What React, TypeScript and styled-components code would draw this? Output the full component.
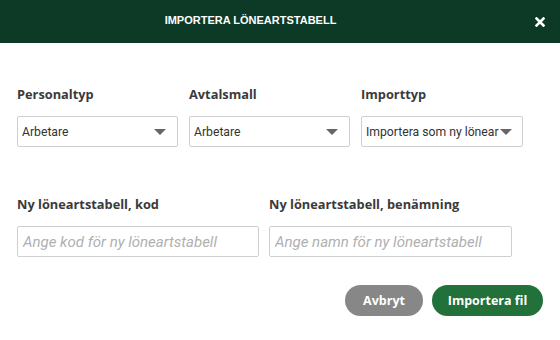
import styled, { createGlobalStyle } from 'styled-components'

const GlobalStyle = createGlobalStyle`
  html, body {
    margin: 0;
    padding: 0;
    background: #ffffff;
  }
`

const StyledDialog = styled.div`
  width: 560px;
  height: 340px;
  display: flex;
  flex-direction: column;
  background: #ffffff;
  font-family: 'Open Sans', 'Liberation Sans', sans-serif;
`

const StyledHeader = styled.div`
  height: 43px;
  flex: 0 0 auto;
  display: flex;
  align-items: center;
  background: #0c3a27;
  color: #ffffff;
  padding: 0 13px 0 0;
`

const StyledTitle = styled.div`
  flex: 1 1 auto;
  text-align: center;
  padding-right: 32px;
  font-family: 'Liberation Sans', Arial, sans-serif;
  font-weight: 700;
  font-size: 11px;
  margin-top: -4px;
`

const StyledClose = styled.div`
  width: 14px;
  display: flex;
  justify-content: center;
`

const StyledBody = styled.div`
  flex: 1 1 auto;
  display: flex;
  flex-direction: column;
  padding: 42px 17px 0;
`

const StyledRow = styled.div<{ $gap: number; $spacing: number }>`
  display: flex;
  gap: ${({ $gap }) => $gap}px;
  margin-bottom: ${({ $spacing }) => $spacing}px;
`

const StyledField = styled.div<{ $width: number }>`
  width: ${({ $width }) => $width}px;
  display: flex;
  flex-direction: column;
`

const StyledLabel = styled.label`
  font-weight: 700;
  font-size: 12.8px;
  color: #3a3a3a;
  line-height: 18px;
  margin-bottom: 13px;
`

const StyledSelect = styled.div<{ $padRight?: number }>`
  height: 31px;
  box-sizing: border-box;
  border: 1px solid #cfcfcf;
  border-radius: 2px;
  display: flex;
  align-items: center;
  padding: 0 ${({ $padRight }) => $padRight ?? 11}px 0 4px;
  font-family: Roboto, 'Liberation Sans', sans-serif;
  font-size: 12.2px;
  color: #333333;
`

const StyledSelectText = styled.span`
  flex: 1 1 auto;
  overflow: hidden;
  white-space: nowrap;
`

const StyledArrow = styled.span`
  flex: 0 0 auto;
  width: 0;
  height: 0;
  border-left: 6px solid transparent;
  border-right: 6px solid transparent;
  border-top: 6px solid #666666;
  margin-left: 1px;
`

const StyledInput = styled.input`
  height: 31px;
  box-sizing: border-box;
  border: 1px solid #cfcfcf;
  border-radius: 2px;
  padding: 0 5px;
  font-family: Roboto, 'Liberation Sans', sans-serif;
  font-size: 15px;
  outline: none;
  &::placeholder {
    color: #b0b0b0;
    font-style: italic;
  }
`

const StyledFooter = styled.div`
  display: flex;
  justify-content: flex-end;
  gap: 9px;
`

const StyledButton = styled.button<{ $variant: 'grey' | 'green'; $width: number }>`
  width: ${({ $width }) => $width}px;
  height: 31px;
  border: none;
  border-radius: 16px;
  background: ${({ $variant }) => ($variant === 'green' ? '#22703a' : '#878787')};
  color: #ffffff;
  font-family: 'Open Sans', 'Liberation Sans', sans-serif;
  font-weight: 700;
  font-size: 12.5px;
  cursor: pointer;
`

const App = () => {
  return (
    <>
      <GlobalStyle />
      <StyledDialog>
        <StyledHeader>
          <StyledTitle>IMPORTERA LÖNEARTSTABELL</StyledTitle>
          <StyledClose>
            <svg width="10" height="10" viewBox="0 0 10 10">
              <path
                d="M1.5 1.5 L8.5 8.5 M8.5 1.5 L1.5 8.5"
                stroke="#ffffff"
                strokeWidth="2.6"
                strokeLinecap="square"
              />
            </svg>
          </StyledClose>
        </StyledHeader>
        <StyledBody>
          <StyledRow $gap={11} $spacing={48}>
            <StyledField $width={161}>
              <StyledLabel>Personaltyp</StyledLabel>
              <StyledSelect>
                <StyledSelectText>Arbetare</StyledSelectText>
                <StyledArrow />
              </StyledSelect>
            </StyledField>
            <StyledField $width={161}>
              <StyledLabel>Avtalsmall</StyledLabel>
              <StyledSelect>
                <StyledSelectText>Arbetare</StyledSelectText>
                <StyledArrow />
              </StyledSelect>
            </StyledField>
            <StyledField $width={162}>
              <StyledLabel>Importtyp</StyledLabel>
              <StyledSelect $padRight={10}>
                <StyledSelectText>Importera som ny lönear</StyledSelectText>
                <StyledArrow />
              </StyledSelect>
            </StyledField>
          </StyledRow>
          <StyledRow $gap={10} $spacing={28}>
            <StyledField $width={242}>
              <StyledLabel>Ny löneartstabell, kod</StyledLabel>
              <StyledInput placeholder="Ange kod för ny löneartstabell" />
            </StyledField>
            <StyledField $width={243}>
              <StyledLabel>Ny löneartstabell, benämning</StyledLabel>
              <StyledInput placeholder="Ange namn för ny löneartstabell" />
            </StyledField>
          </StyledRow>
          <StyledFooter>
            <StyledButton $variant="grey" $width={78}>
              Avbryt
            </StyledButton>
            <StyledButton $variant="green" $width={111}>
              Importera fil
            </StyledButton>
          </StyledFooter>
        </StyledBody>
      </StyledDialog>
    </>
  )
}

export default App
